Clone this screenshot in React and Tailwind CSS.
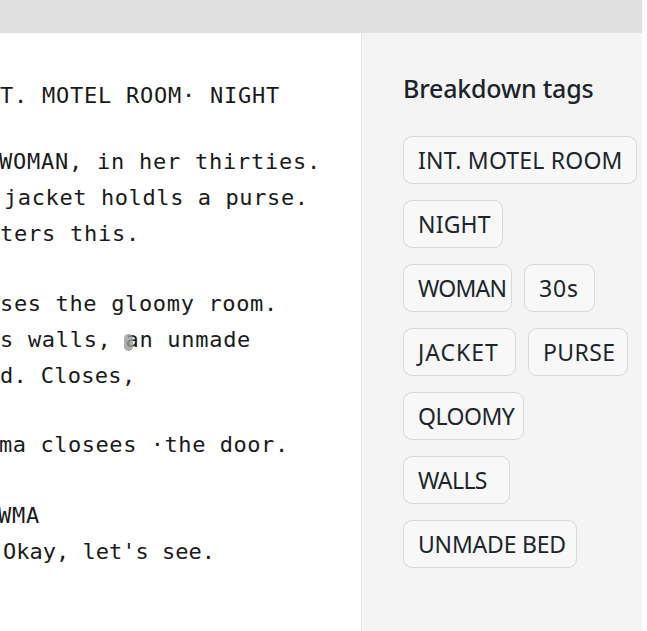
import React from "react";

const scriptLines = [
  { text: "T. MOTEL ROOM· NIGHT", top: "mt-[45px]", left: "ml-0", track: "tracking-[0.75px]" },
  { text: "WOMAN, in her thirties.", top: "mt-[30px]", left: "-ml-[1px]", track: "tracking-[0.75px]" },
  { text: "jacket holdls a purse.", top: "mt-0", left: "ml-[4px]", track: "tracking-[0.6px]" },
  { text: "ters this.", top: "mt-0", left: "ml-0", track: "tracking-[0.75px]" },
  { text: "ses the gloomy room.", top: "mt-[34px]", left: "ml-0", track: "tracking-[0.65px]" },
  { text: "s walls, an unmade", top: "mt-0", left: "ml-0", track: "tracking-[0.7px]", blob: true },
  { text: "d. Closes,", top: "mt-0", left: "ml-0", track: "tracking-[0.3px]" },
  { text: "ma closees ·the door.", top: "mt-[33px]", left: "-ml-[1px]", track: "tracking-[0.55px]" },
  { text: "WMA", top: "mt-[35px]", left: "-ml-[2px]", track: "tracking-[0.75px]" },
  { text: "Okay, let's see.", top: "mt-0", left: "ml-[3px]", track: "tracking-[0px]" },
];

// box widths taken from the screenshot, light tracking to get close to its letter widths
const tagRows = [
  [{ label: "INT. MOTEL ROOM", w: "w-[234px]", t: "tracking-[0.2px]" }],
  [{ label: "NIGHT", w: "w-[100px]", t: "tracking-[0.2px]" }],
  [
    { label: "WOMAN", w: "w-[109px]", t: "tracking-[-0.8px]" },
    { label: "30s", w: "w-[71px]", t: "tracking-[0.8px]" },
  ],
  [
    { label: "JACKET", w: "w-[113px]", t: "tracking-[1px]" },
    { label: "PURSE", w: "w-[100px]", t: "tracking-[0.4px]" },
  ],
  [{ label: "QLOOMY", w: "w-[121px]", t: "tracking-[-0.5px]" }],
  [{ label: "WALLS", w: "w-[107px]", t: "tracking-[-0.6px]" }],
  [{ label: "UNMADE BED", w: "w-[174px]", t: "tracking-[-0.2px]" }],
];

function ScriptPane() {
  return (
    <div className="w-[362px] shrink-0 overflow-hidden bg-white border-r border-[#e6e6e6] font-['DejaVu_Sans_Mono',monospace] text-[22px] leading-[36px] text-[#1a1a1a]">
      {scriptLines.map((line) => (
        <div key={line.text} className={`${line.top} ${line.left} ${line.track} whitespace-pre relative`}>
          {line.blob ? (
            <>
              {"s walls, "}
              <span className="relative">
                <span className="absolute left-[-2px] top-[7px] w-[9px] h-[17px] rounded-full bg-[#9a9a9a] opacity-80" />
                a
              </span>
              {"n unmade"}
            </>
          ) : (
            line.text
          )}
        </div>
      ))}
    </div>
  );
}

function TagsPane() {
  return (
    <div className="flex-1 bg-[#f4f4f4] pl-[41px] pt-[37px] font-['Noto_Sans',sans-serif]">
      <h2 className="text-[25px] leading-[36px] font-medium text-[#1c232b] tracking-[-0.2px]">
        Breakdown tags
      </h2>
      <div className="mt-[30px] flex flex-col gap-4">
        {tagRows.map((row, i) => (
          <div key={i} className="flex gap-3">
            {row.map((tag) => (
              <span
                key={tag.label}
                className={`${tag.w} ${tag.t} h-12 pl-[14px] flex items-center rounded-[9px] border-[1.5px] border-[#d9d9d9] bg-[#f8f8f8] text-[23px] text-[#1d252d] whitespace-nowrap`}
              >
                {tag.label}
              </span>
            ))}
          </div>
        ))}
      </div>
    </div>
  );
}

export default function App() {
  return (
    <div className="w-[642px] h-[631px] flex flex-col overflow-hidden">
      <div className="h-[33px] shrink-0 bg-[#e0e0e0]" />
      <div className="flex flex-1 min-h-0">
        <ScriptPane />
        <TagsPane />
      </div>
    </div>
  );
}
